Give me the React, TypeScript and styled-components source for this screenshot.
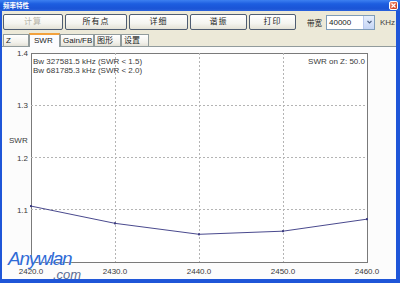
import React from 'react';
import styled, { createGlobalStyle } from 'styled-components';

const GlobalStyle = createGlobalStyle`
  html, body {
    margin: 0;
    padding: 0;
    background: #ffffff;
  }
  body {
    font-family: "Liberation Sans", "Noto Sans CJK SC", sans-serif;
  }
`;

const CJK = `"Liberation Sans", "Noto Sans CJK SC", sans-serif`;

const Window = styled.div`
  position: relative;
  width: 400px;
  height: 283px;
  display: flex;
  flex-direction: column;
  background: #1f56d8;
  overflow: hidden;
`;

const TitleBar = styled.div`
  height: 11px;
  flex: none;
  display: flex;
  align-items: center;
  justify-content: space-between;
  padding: 0 2px 0 3px;
  background: linear-gradient(to bottom, #3d80f0 0%, #1d5ee0 35%, #1a54d6 75%, #2a62dc 100%);
`;

const Title = styled.span`
  color: #ffffff;
  font-family: ${CJK};
  font-weight: bold;
  font-size: 6.5px;
  line-height: 11px;
`;

const CloseButton = styled.div`
  width: 9px;
  height: 9px;
  border: 1px solid #ffffff;
  border-radius: 2px;
  box-sizing: border-box;
  background: linear-gradient(135deg, #f0a08a 0%, #e0583a 50%, #c63a1c 100%);
  display: flex;
  align-items: center;
  justify-content: center;
`;

const Frame = styled.div`
  flex: 1;
  display: flex;
  flex-direction: column;
  margin: 0 4px 4px 2px;
  background: #ece9d8;
  min-height: 0;
`;

const Toolbar = styled.div`
  height: 22px;
  flex: none;
  display: flex;
  align-items: center;
  gap: 2px;
  padding: 0 0 0 1px;
  box-sizing: border-box;
  white-space: nowrap;
`;

const ToolButton = styled.button<{ $w: number; $disabled?: boolean }>`
  flex: none;
  width: ${({ $w }) => $w}px;
  height: 16px;
  padding: 0;
  margin: 0;
  border: 1px solid #4f5d72;
  border-radius: 2px;
  background: linear-gradient(to bottom, #ffffff 0%, #f4f4f0 60%, #e4e2d6 100%);
  color: ${({ $disabled }) => ($disabled ? '#b8b5a8' : '#222222')};
  font-family: ${CJK};
  font-size: 8px;
  letter-spacing: 1px;
  line-height: 14px;
  box-sizing: border-box;
`;

const FieldLabel = styled.span`
  flex: none;
  margin-left: 9px;
  font-family: ${CJK};
  font-size: 7.5px;
  color: #222222;
  white-space: nowrap;
`;

const Select = styled.div`
  flex: none;
  width: 49px;
  height: 15px;
  margin-left: 2px;
  border: 1px solid #7f9db9;
  background: #ffffff;
  box-sizing: border-box;
  display: flex;
  align-items: center;
  justify-content: space-between;
  padding-left: 2px;
  font-family: "Liberation Sans", sans-serif;
  font-size: 8px;
  color: #222222;
`;

const SelectArrow = styled.div`
  width: 10px;
  height: 13px;
  background: linear-gradient(to bottom, #e6eefc 0%, #c5d5f5 100%);
  border-left: 1px solid #b9c9ef;
  display: flex;
  align-items: center;
  justify-content: center;
`;

const Unit = styled.span`
  flex: none;
  margin-left: 3px;
  font-family: "Liberation Sans", sans-serif;
  font-size: 8px;
  color: #444444;
`;

const TabStrip = styled.div`
  height: 14px;
  flex: none;
  display: flex;
  align-items: flex-end;
  padding-left: 1px;
`;

const Tab = styled.div<{ $w: number; $active?: boolean }>`
  flex: none;
  width: ${({ $w }) => $w}px;
  height: ${({ $active }) => ($active ? 14 : 13)}px;
  box-sizing: border-box;
  border: 1px solid #919b9c;
  border-bottom: ${({ $active }) => ($active ? 'none' : '1px solid #919b9c')};
  border-top: ${({ $active }) => ($active ? '2px solid #f2a13c' : '1px solid #919b9c')};
  background: ${({ $active }) =>
    $active ? '#fcfcfe' : 'linear-gradient(to bottom, #ffffff 0%, #f1f0ea 70%, #e3e1d6 100%)'};
  padding-left: ${({ $active }) => ($active ? 4 : 2)}px;
  font-family: ${CJK};
  font-size: 8px;
  line-height: 11px;
  color: #222222;
  white-space: nowrap;
  position: relative;
  z-index: ${({ $active }) => ($active ? 1 : 0)};
`;

const Panel = styled.div`
  position: relative;
  flex: 1;
  min-height: 0;
  background: #fcfcfc;
  border-top: 1px solid #919b9c;
  margin-top: -1px;
`;

const Watermark = styled.div`
  position: absolute;
  left: 6px;
  top: 203px;
  display: flex;
  flex-direction: column;
  pointer-events: none;
`;

const MarkMain = styled.span`
  font-family: "Liberation Sans", sans-serif;
  font-style: italic;
  font-size: 19px;
  letter-spacing: -1.2px;
  line-height: 17px;
  color: #2f6bd6;
  text-shadow: 0 0 1px #ffffff;
`;

const MarkSub = styled.span`
  margin-left: 45px;
  font-family: "Liberation Sans", sans-serif;
  font-style: italic;
  font-size: 13px;
  line-height: 15px;
  color: #5a6c93;
`;

const buttons = [
  { label: '计算', w: 60, disabled: true },
  { label: '所有点', w: 62 },
  { label: '详细', w: 59 },
  { label: '谐振', w: 57 },
  { label: '打印', w: 47 },
];

const tabs = [
  { label: 'Z', w: 26 },
  { label: 'SWR', w: 31, active: true },
  { label: 'Gain/FB', w: 34 },
  { label: '图形', w: 27 },
  { label: '设置', w: 28 },
];

// plot box in page pixels
const X0 = 31;
const X1 = 367;
const Y0 = 53;
const Y1 = 262;
const FMIN = 2420;
const FMAX = 2460;
const SMIN = 1.0;
const SMAX = 1.4;

const fx = (f: number) => X0 + ((f - FMIN) / (FMAX - FMIN)) * (X1 - X0);
const sy = (s: number) => Y1 - ((s - SMIN) / (SMAX - SMIN)) * (Y1 - Y0);

const data: [number, number][] = [
  [2420, 1.107],
  [2430, 1.074],
  [2440, 1.053],
  [2450, 1.059],
  [2460, 1.082],
];

const xTicks = [2420, 2430, 2440, 2450, 2460];
const yTicks = [1.1, 1.2, 1.3, 1.4];

const SwrChart: React.FC = () => {
  const pts = data.map(([f, s]) => `${fx(f)},${sy(s)}`).join(' ');
  return (
    <svg width={394} height={232} style={{ display: 'block' }}>
      <g transform="translate(-2,-47)" fontFamily='"Liberation Sans", sans-serif' fontSize={8} fill="#3a3a3a">
        <rect x={X0} y={Y0} width={X1 - X0} height={Y1 - Y0} fill="#ffffff" stroke="#7a7a7a" strokeWidth={1} shapeRendering="crispEdges" />
        {xTicks.slice(1, -1).map((f) => (
          <line key={f} x1={fx(f)} x2={fx(f)} y1={Y0} y2={Y1} stroke="#b4b4b4" strokeDasharray="2 2" shapeRendering="crispEdges" />
        ))}
        {yTicks.slice(0, -1).map((s) => (
          <line key={s} x1={X0} x2={X1} y1={sy(s)} y2={sy(s)} stroke="#b4b4b4" strokeDasharray="2 2" shapeRendering="crispEdges" />
        ))}
        {yTicks.map((s) => (
          <text key={s} x={28} y={sy(s) + 3} textAnchor="end">{s.toFixed(1)}</text>
        ))}
        {xTicks.map((f) => (
          <text key={f} x={fx(f)} y={274} textAnchor="middle">{f.toFixed(1)}</text>
        ))}
        <text x={9} y={143}>SWR</text>
        <text x={33} y={64}>Bw 327581.5 kHz (SWR &lt; 1.5)</text>
        <text x={33} y={73}>Bw 681785.3 kHz (SWR &lt; 2.0)</text>
        <text x={365} y={64} textAnchor="end">SWR on Z: 50.0</text>
        <polyline points={pts} fill="none" stroke="#4a4a8e" strokeWidth={1} />
        {data.map(([f, s]) => (
          <rect key={f} x={fx(f) - 1} y={sy(s) - 1} width={2} height={2} fill="#3c3c80" />
        ))}
      </g>
    </svg>
  );
};

const App: React.FC = () => {
  return (
    <>
      <GlobalStyle />
      <Window>
        <TitleBar>
          <Title>频率特性</Title>
          <CloseButton>
            <svg width={5} height={5} viewBox="0 0 5 5">
              <path d="M0.5 0.5 L4.5 4.5 M4.5 0.5 L0.5 4.5" stroke="#ffffff" strokeWidth={1.2} />
            </svg>
          </CloseButton>
        </TitleBar>
        <Frame>
          <Toolbar>
            {buttons.map((b) => (
              <ToolButton key={b.label} $w={b.w} $disabled={b.disabled}>
                {b.label}
              </ToolButton>
            ))}
            <FieldLabel>带宽</FieldLabel>
            <Select>
              40000
              <SelectArrow>
                <svg width={5} height={4} viewBox="0 0 5 4">
                  <path d="M0.5 1 L2.5 3 L4.5 1" fill="none" stroke="#4d6185" strokeWidth={1.1} />
                </svg>
              </SelectArrow>
            </Select>
            <Unit>KHz</Unit>
          </Toolbar>
          <TabStrip>
            {tabs.map((t) => (
              <Tab key={t.label} $w={t.w} $active={t.active}>
                {t.label}
              </Tab>
            ))}
          </TabStrip>
          <Panel>
            <SwrChart />
            <Watermark>
              <MarkMain>Anywlan</MarkMain>
              <MarkSub>.com</MarkSub>
            </Watermark>
          </Panel>
        </Frame>
      </Window>
    </>
  );
};

export default App;
